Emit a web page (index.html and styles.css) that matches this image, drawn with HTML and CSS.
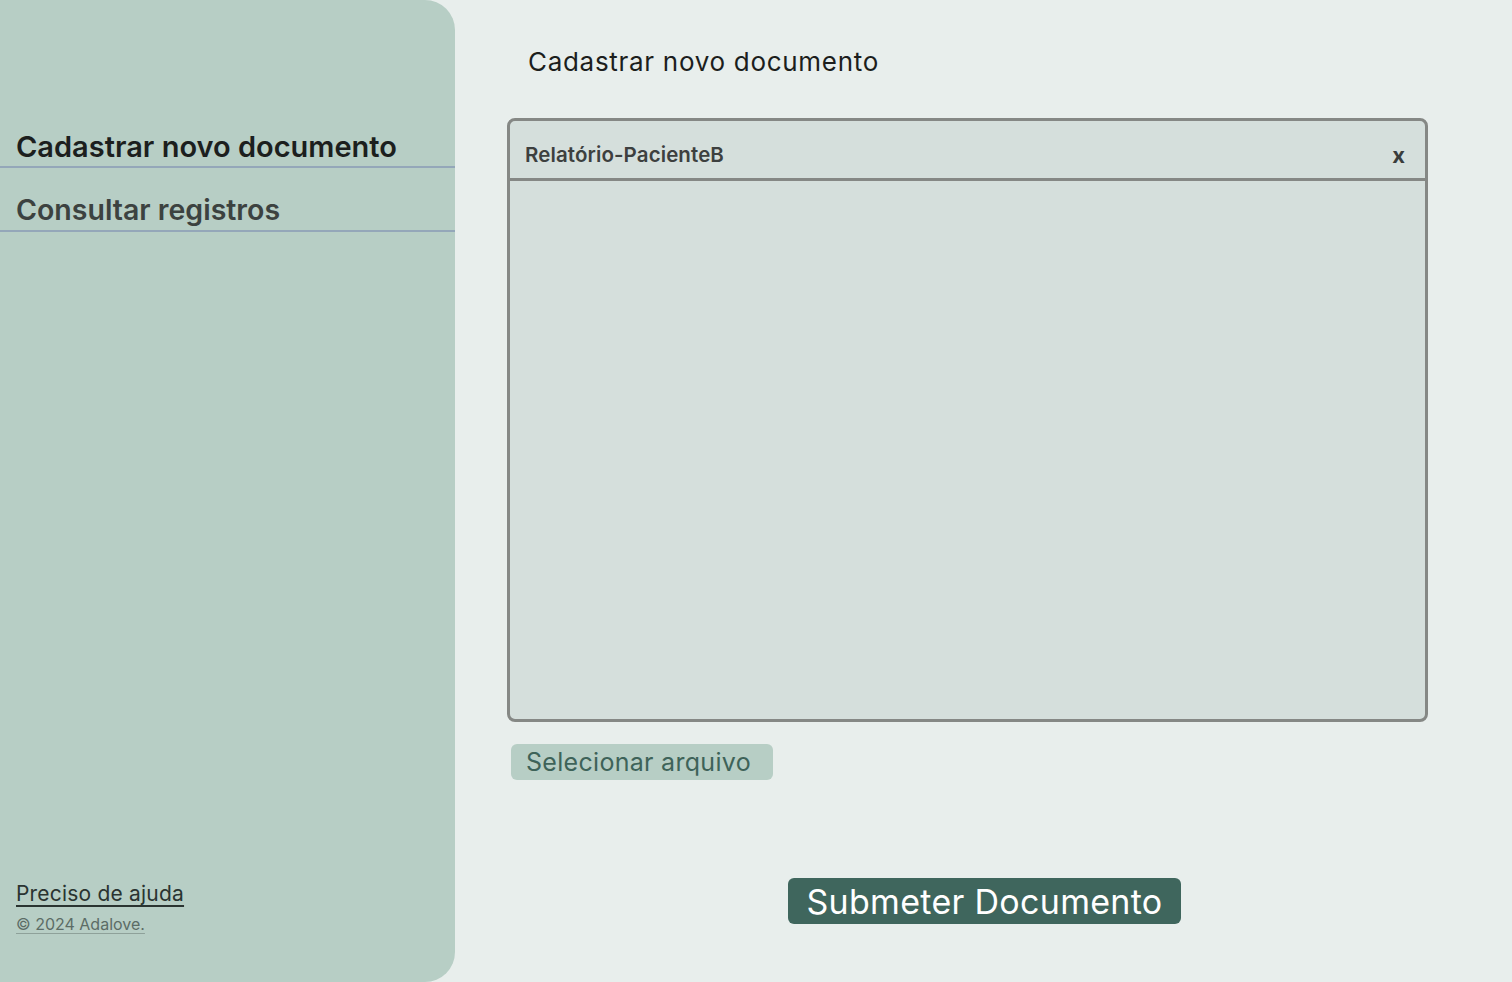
FILE: index.html
```html
<!DOCTYPE html>
<html lang="pt-BR">
<head>
<meta charset="utf-8">
<title>Cadastrar novo documento</title>
<link rel="stylesheet" href="styles.css">
</head>
<body>
<div class="layout">
  <aside class="sidebar">
    <nav class="nav">
      <a class="nav-item active" href="#">Cadastrar novo documento</a>
      <a class="nav-item" href="#">Consultar registros</a>
    </nav>
    <footer class="side-footer">
      <a class="help" href="#">Preciso de ajuda</a>
      <a class="copy" href="#">© 2024 Adalove.</a>
    </footer>
  </aside>
  <main class="main">
    <h1 class="title">Cadastrar novo documento</h1>
    <section class="upload">
      <div class="upload-head">
        <span class="file-name">Relatório-PacienteB</span>
        <span class="close">x</span>
      </div>
      <div class="upload-body"></div>
    </section>
    <div class="select-row"><button class="select-btn">Selecionar arquivo</button></div>
    <div class="submit-row"><button class="submit-btn">Submeter Documento</button></div>
  </main>
</div>
</body>
</html>
```
FILE: styles.css
```css
* { box-sizing: border-box; }
html, body { margin: 0; padding: 0; }
body {
  background: #e8eeec;
  font-family: "Inter", "Noto Sans", sans-serif;
  color: #1e1e1e;
}
.layout {
  display: flex;
  height: 982px;
}
.sidebar {
  width: 455px;
  flex: none;
  background: #b7cec5;
  border-radius: 0 30px 30px 0;
  display: flex;
  flex-direction: column;
  justify-content: space-between;
  padding: 127px 0 48px;
}
.nav { display: flex; flex-direction: column; }
.nav-item {
  display: block;
  padding: 0 16px;
  font-weight: 600;
  line-height: 40px;
  color: #3c4240;
  text-decoration: none;
  border-bottom: 2px solid #94a7b9;
}
.nav-item.active { color: #1c1f1e; height: 41px; font-size: 29px; }
.nav-item:not(.active) { height: 64px; padding-top: 22px; font-size: 28.5px; }
.side-footer { display: flex; flex-direction: column; padding-left: 16px; gap: 8px; }
.help {
  font-size: 21px;
  letter-spacing: 0.2px;
  color: #2a3431;
  text-decoration: underline;
  text-underline-offset: 4px;
}
.copy {
  font-size: 16px;
  color: #5c6c66;
  text-decoration: underline;
  text-decoration-color: #8ea19a;
  text-underline-offset: 3px;
}
.main {
  flex: 1;
  padding: 44px 0 0 52px;
  display: flex;
  flex-direction: column;
}
.title {
  margin: 0 0 38px 21px;
  font-size: 26px;
  letter-spacing: 0.7px;
  font-weight: 400;
  line-height: 36px;
  color: #1c1e1d;
}
.upload {
  width: 921px;
  height: 604px;
  border: 3px solid #858885;
  border-radius: 8px;
  background: #d5dfdc;
  display: flex;
  flex-direction: column;
}
.upload-head {
  height: 60px;
  flex: none;
  border-bottom: 3px solid #858885;
  display: flex;
  align-items: center;
  justify-content: space-between;
  padding: 10px 20px 0 15px;
}
.file-name { font-size: 20.5px; letter-spacing: 0.1px; font-weight: 600; color: #3d403f; }
.close { font-size: 22px; font-weight: 700; color: #3a3d3c; }
.upload-body { flex: 1; }
.select-row { margin: 22px 0 0 4px; }
.select-btn {
  border: 0;
  border-radius: 6px;
  background: #b7cec5;
  color: #3e6359;
  font-family: inherit;
  font-size: 25px;
  letter-spacing: 0.3px;
  height: 36px;
  width: 262px;
  padding: 0 0 0 15px;
  text-align: left;
}
.submit-row { margin-top: 98px; padding-left: 281px; }
.submit-btn {
  border: 0;
  border-radius: 6px;
  background: #3f665d;
  color: #ffffff;
  font-family: inherit;
  font-size: 34px;
  letter-spacing: 0.3px;
  height: 46px;
  width: 393px;
  padding: 0;
}
```
